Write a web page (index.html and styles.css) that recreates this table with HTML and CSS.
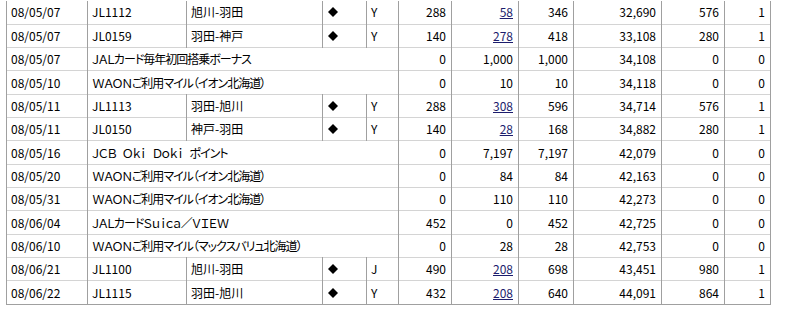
FILE: index.html
```html
<!DOCTYPE html>
<html lang="ja">
<head>
    <meta charset="UTF-8">
    <title>マイル明細</title>
    <link rel="stylesheet" href="styles.css">
</head>
<body>
    <table class="mile-table">
        <colgroup>
            <col class="c-date">
            <col class="c-flight">
            <col class="c-route">
            <col class="c-mark">
            <col class="c-class">
            <col class="c-num1">
            <col class="c-num2">
            <col class="c-num3">
            <col class="c-total">
            <col class="c-fop">
            <col class="c-count">
        </colgroup>
        <tbody>
            <tr>
                <td>08/05/07</td><td>JL1112</td><td>旭川-羽田</td><td class="mark"><svg class="diamond" viewBox="0 0 10 10"><path d="M5 0L10 5L5 10L0 5Z"/></svg></td><td>Y</td>
                <td class="num">288</td><td class="num"><a href="#">58</a></td><td class="num">346</td><td class="num">32,690</td><td class="num">576</td><td class="num">1</td>
            </tr>
            <tr>
                <td>08/05/07</td><td>JL0159</td><td>羽田-神戸</td><td class="mark"><svg class="diamond" viewBox="0 0 10 10"><path d="M5 0L10 5L5 10L0 5Z"/></svg></td><td>Y</td>
                <td class="num">140</td><td class="num"><a href="#">278</a></td><td class="num">418</td><td class="num">33,108</td><td class="num">280</td><td class="num">1</td>
            </tr>
            <tr>
                <td>08/05/07</td><td colspan="4" class="desc">ＪＡＬカード毎年初回搭乗ボーナス</td>
                <td class="num">0</td><td class="num">1,000</td><td class="num">1,000</td><td class="num">34,108</td><td class="num">0</td><td class="num">0</td>
            </tr>
            <tr>
                <td>08/05/10</td><td colspan="4" class="desc">ＷＡＯＮご利用マイル（イオン北海道）</td>
                <td class="num">0</td><td class="num">10</td><td class="num">10</td><td class="num">34,118</td><td class="num">0</td><td class="num">0</td>
            </tr>
            <tr>
                <td>08/05/11</td><td>JL1113</td><td>羽田-旭川</td><td class="mark"><svg class="diamond" viewBox="0 0 10 10"><path d="M5 0L10 5L5 10L0 5Z"/></svg></td><td>Y</td>
                <td class="num">288</td><td class="num"><a href="#">308</a></td><td class="num">596</td><td class="num">34,714</td><td class="num">576</td><td class="num">1</td>
            </tr>
            <tr>
                <td>08/05/11</td><td>JL0150</td><td>神戸-羽田</td><td class="mark"><svg class="diamond" viewBox="0 0 10 10"><path d="M5 0L10 5L5 10L0 5Z"/></svg></td><td>Y</td>
                <td class="num">140</td><td class="num"><a href="#">28</a></td><td class="num">168</td><td class="num">34,882</td><td class="num">280</td><td class="num">1</td>
            </tr>
            <tr>
                <td>08/05/16</td><td colspan="4" class="desc spaced">ＪＣＢ Ｏｋｉ Ｄｏｋｉ ポイント</td>
                <td class="num">0</td><td class="num">7,197</td><td class="num">7,197</td><td class="num">42,079</td><td class="num">0</td><td class="num">0</td>
            </tr>
            <tr>
                <td>08/05/20</td><td colspan="4" class="desc">ＷＡＯＮご利用マイル（イオン北海道）</td>
                <td class="num">0</td><td class="num">84</td><td class="num">84</td><td class="num">42,163</td><td class="num">0</td><td class="num">0</td>
            </tr>
            <tr>
                <td>08/05/31</td><td colspan="4" class="desc">ＷＡＯＮご利用マイル（イオン北海道）</td>
                <td class="num">0</td><td class="num">110</td><td class="num">110</td><td class="num">42,273</td><td class="num">0</td><td class="num">0</td>
            </tr>
            <tr>
                <td>08/06/04</td><td colspan="4" class="desc">ＪＡＬカードＳｕｉｃａ／ＶＩＥＷ</td>
                <td class="num">452</td><td class="num">0</td><td class="num">452</td><td class="num">42,725</td><td class="num">0</td><td class="num">0</td>
            </tr>
            <tr>
                <td>08/06/10</td><td colspan="4" class="desc">ＷＡＯＮご利用マイル（マックスバリュ北海道）</td>
                <td class="num">0</td><td class="num">28</td><td class="num">28</td><td class="num">42,753</td><td class="num">0</td><td class="num">0</td>
            </tr>
            <tr>
                <td>08/06/21</td><td>JL1100</td><td>旭川-羽田</td><td class="mark"><svg class="diamond" viewBox="0 0 10 10"><path d="M5 0L10 5L5 10L0 5Z"/></svg></td><td>J</td>
                <td class="num">490</td><td class="num"><a href="#">208</a></td><td class="num">698</td><td class="num">43,451</td><td class="num">980</td><td class="num">1</td>
            </tr>
            <tr>
                <td>08/06/22</td><td>JL1115</td><td>羽田-旭川</td><td class="mark"><svg class="diamond" viewBox="0 0 10 10"><path d="M5 0L10 5L5 10L0 5Z"/></svg></td><td>Y</td>
                <td class="num">432</td><td class="num"><a href="#">208</a></td><td class="num">640</td><td class="num">44,091</td><td class="num">864</td><td class="num">1</td>
            </tr>
        </tbody>
    </table>
</body>
</html>
```

FILE: styles.css
```css
body {
    margin: 0;
    background: #fff;
    font-family: "Noto Sans CJK JP", "DejaVu Sans", sans-serif;
    font-size: 12px;
    color: #000;
}
.mile-table {
    margin: 1px 0 0 6px;
    border-collapse: collapse;
    table-layout: fixed;
    width: 765px;
    border-bottom: 1px solid #a0a0a0;
    border-left: 1px solid #a0a0a0;
    border-right: 1px solid #a0a0a0;
}
.c-date { width: 81px; }
.c-flight { width: 99px; }
.c-route { width: 136px; }
.c-mark { width: 44px; }
.c-class { width: 32px; }
.c-num1 { width: 53px; }
.c-num2 { width: 67px; }
.c-num3 { width: 55px; }
.c-total { width: 88px; }
.c-fop { width: 63px; }
.c-count { width: 46px; }
.mile-table tr {
    height: 23.33px;
}
.mile-table td {
    padding: 0 4px;
    border-left: 1px solid #a0a0a0;
    border-right: 1px solid #a0a0a0;
    border-top: 1px solid #d4d4d4;
    white-space: nowrap;
    overflow: hidden;
    vertical-align: middle;
    line-height: 14px;
}
.mile-table tr:first-child td {
    border-top: none;
}
.mile-table td.num {
    text-align: right;
    padding-right: 5px;
}
.mile-table td.mark {
    padding-left: 5px;
}
.diamond {
    display: block;
    width: 10px;
    height: 10px;
    fill: #000;
}
.mile-table td.desc {
    font-feature-settings: "palt";
    letter-spacing: -1px;
}
.mile-table td.spaced {
    word-spacing: 5px;
}
.mile-table a {
    color: #1c1c6c;
    text-decoration: underline;
}
```
